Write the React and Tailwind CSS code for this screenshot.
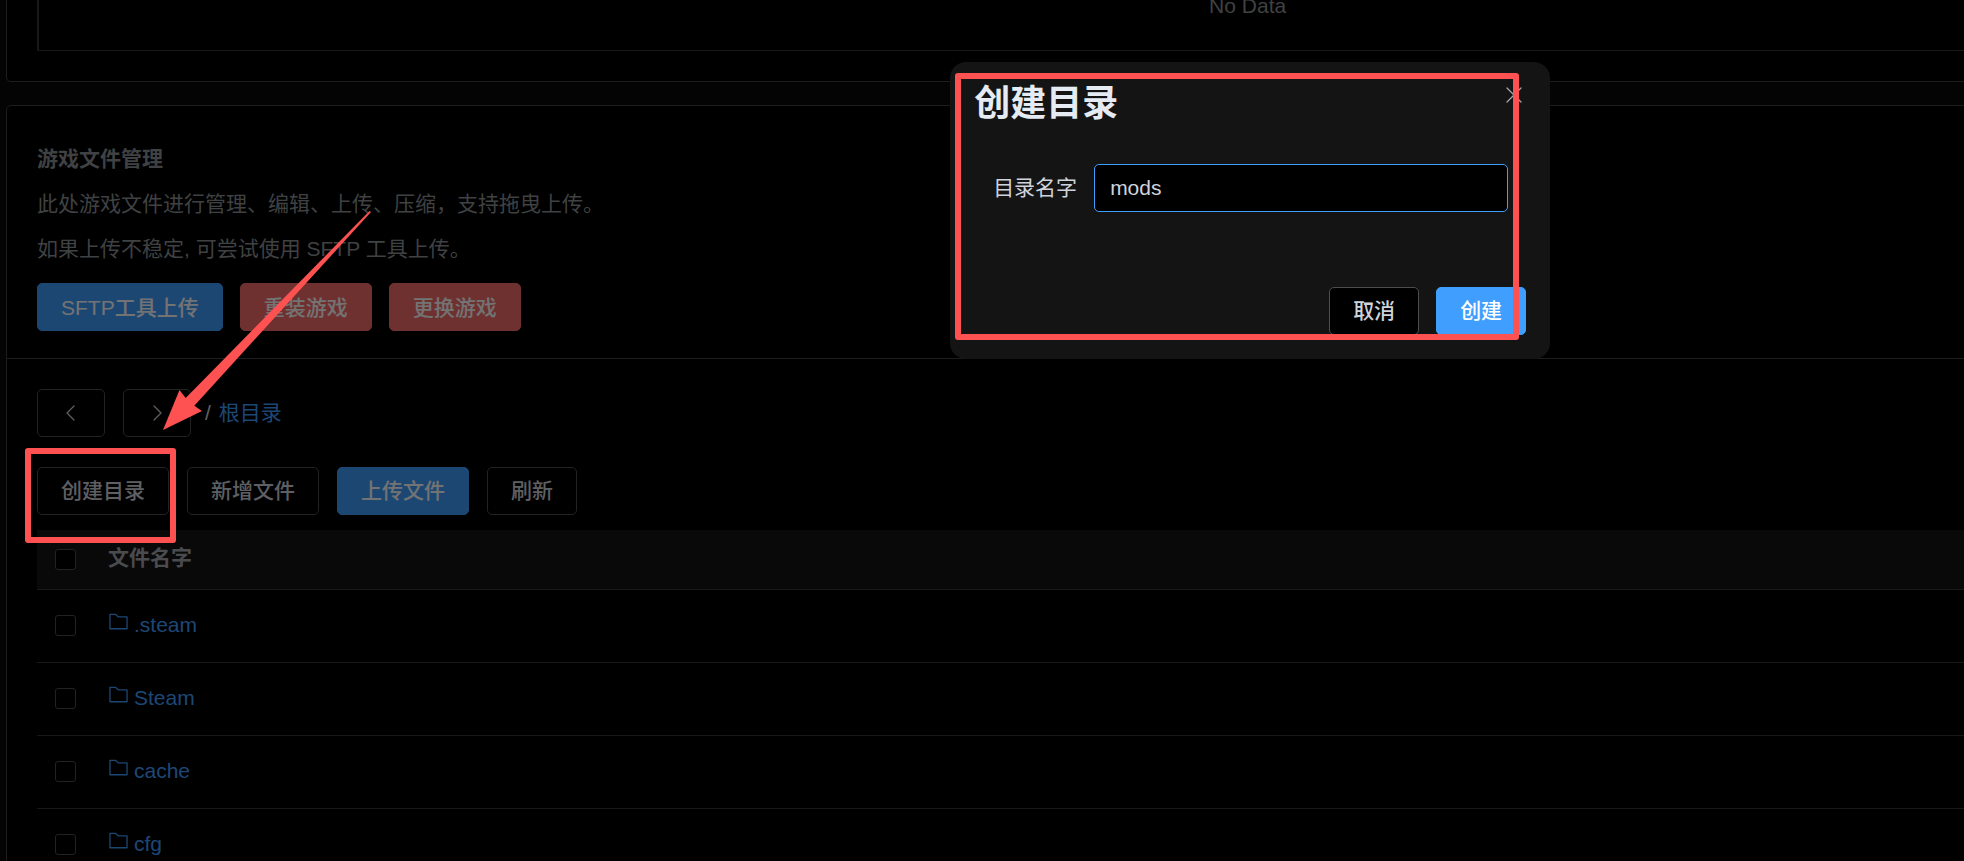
import { useState } from "react";

const folders = [".steam", "Steam", "cache", "cfg"];

const variants = {
  default: "border-[#4c4d4f] bg-black text-[#cfd3dc]",
  primary: "border-[#409eff] bg-[#409eff] text-white",
  danger: "border-[#f56c6c] bg-[#f56c6c] text-white",
};

const Button = ({ variant = "default", children, ...rest }) => (
  <button
    type="button"
    className={`h-12 shrink-0 rounded-[5px] border px-[23px] font-medium whitespace-nowrap ${variants[variant]}`}
    {...rest}
  >
    {children}
  </button>
);

const LineIcon = ({ d }) => (
  <svg
    width="20"
    height="20"
    viewBox="0 0 20 20"
    fill="none"
    stroke="currentColor"
    strokeWidth="1.3"
    strokeLinecap="round"
    strokeLinejoin="round"
    aria-hidden="true"
  >
    <path d={d} />
  </svg>
);

const FolderIcon = () => (
  <svg
    width="21"
    height="21"
    viewBox="0 0 1024 1024"
    fill="currentColor"
    aria-hidden="true"
  >
    <path d="M128 192v640h768V320H485.76L357.504 192zm-32-64h287.872l128.384 128H928a32 32 0 0 1 32 32v576a32 32 0 0 1-32 32H96a32 32 0 0 1-32-32V160a32 32 0 0 1 32-32" />
  </svg>
);

const Checkbox = ({ label }) => (
  <input
    type="checkbox"
    aria-label={label}
    className="block size-[21px] appearance-none rounded-[3px] border border-[#4c4d4f] bg-black checked:bg-[#409eff]"
  />
);

const FileTable = () => (
  <table className="mt-[15px] w-full border-collapse text-left">
    <thead>
      <tr className="h-[59px] border-b border-[#363637] bg-[#141414] text-[#a3a6ad]">
        <th className="w-[71px] pl-[18px]">
          <Checkbox label="全选" />
        </th>
        <th className="pb-0.5 font-bold">文件名字</th>
      </tr>
    </thead>
    <tbody>
      {folders.map((name) => (
        <tr key={name} className="h-[73px] border-b border-[#363637]">
          <td className="pl-[18px]">
            <Checkbox label={name} />
          </td>
          <td className="pb-0.5">
            <a href="#" className="flex items-center gap-[5px] text-[#409eff]">
              <span className="pb-1.5">
                <FolderIcon />
              </span>
              {name}
            </a>
          </td>
        </tr>
      ))}
    </tbody>
  </table>
);

const CreateDialog = () => {
  const [name, setName] = useState("mods");

  return (
    <div
      role="dialog"
      aria-labelledby="dialog-title"
      className="w-[600px] rounded-2xl bg-[#141414] p-6 text-[#cfd3dc]"
    >
      <div className="flex items-start justify-between">
        <h2
          id="dialog-title"
          className="text-[36px] leading-9 font-bold text-[#e5eaf3]"
        >
          创建目录
        </h2>
        <button type="button" aria-label="关闭" className="mr-0.5 text-[#a3a6ad]">
          <LineIcon d="M3 2L17 16M17 2L3 16" />
        </button>
      </div>

      <div className="mt-[42px] mr-[18px] ml-[19px] flex items-center gap-[17px]">
        <label htmlFor="dir-name" className="shrink-0">
          目录名字
        </label>
        <input
          id="dir-name"
          type="text"
          value={name}
          onChange={(e) => setName(e.target.value)}
          className="h-12 min-w-0 flex-1 rounded-[5px] border border-[#409eff] bg-black px-[15px] outline-none"
        />
      </div>

      <div className="mt-[75px] flex justify-end gap-[17px]">
        <Button>取消</Button>
        <Button variant="primary">创建</Button>
      </div>
    </div>
  );
};

export default function App() {
  return (
    <div className="relative h-screen overflow-hidden bg-[#0a0a0a] font-['Liberation_Sans','Noto_Sans_CJK_SC',sans-serif] text-[21px] leading-[30px]">
      <div className="w-[127%] px-1.5">
        {/* Empty list */}
        <section className="rounded-b-[5px] border border-t-0 border-[#414243] bg-black px-[30px] pb-[30px]">
          <div className="border border-t-0 border-l-2 border-[#363637] pb-[38px]">
            <p className="text-center leading-3 text-[#8d9095]">No Data</p>
          </div>
        </section>

        {/* File manager */}
        <section className="mt-[23px] rounded-[5px] border border-[#414243] bg-black">
          <header className="border-b border-[#414243] px-[30px] pt-[30px] pb-[27px] leading-[45px] text-[#8d9095]">
            <h3 className="font-bold">游戏文件管理</h3>
            <p>此处游戏文件进行管理、编辑、上传、压缩，支持拖曳上传。</p>
            <p>如果上传不稳定, 可尝试使用 SFTP 工具上传。</p>
            <div className="mt-3 flex gap-[17px]">
              <Button variant="primary">SFTP工具上传</Button>
              <Button variant="danger">重装游戏</Button>
              <Button variant="danger">更换游戏</Button>
            </div>
          </header>

          <div className="px-[30px] pt-[30px]">
            <nav className="flex items-center gap-[18px] text-[#cfd3dc]">
              <Button aria-label="后退">
                <LineIcon d="M13 3L6 10L13 17" />
              </Button>
              <Button aria-label="前进">
                <LineIcon d="M7 3L14 10L7 17" />
              </Button>
              <span className="-ml-1 flex gap-2">
                <span>/</span>
                <a href="#" className="text-[#409eff]">
                  根目录
                </a>
              </span>
            </nav>

            <div className="mt-[30px] flex gap-[18px]">
              <Button>创建目录</Button>
              <Button>新增文件</Button>
              <Button variant="primary">上传文件</Button>
              <Button>刷新</Button>
            </div>

            <FileTable />
          </div>
        </section>
      </div>

      {/* Modal */}
      <div className="absolute inset-0 bg-black/55">
        <div className="flex w-[127%] justify-center pt-[62px] pl-1.5">
          <CreateDialog />
        </div>
      </div>

      {/* Annotations */}
      <div className="pointer-events-none absolute top-[73px] left-[955px] h-[267px] w-[564px] rounded-[3px] border-6 border-[#fd5251]" />
      <div className="pointer-events-none absolute top-[448px] left-[25px] h-[95px] w-[151px] rounded-[3px] border-6 border-[#fd5251]" />
      <svg
        className="pointer-events-none absolute top-[210px] left-[163px]"
        width="209"
        height="221"
        viewBox="0 0 209 221"
        fill="#fd5251"
        aria-hidden="true"
      >
        <path d="M0 220L16.500 180L22.700 188L206.500 1L208 2L31.300 195.700L39 201Z" />
      </svg>
    </div>
  );
}
